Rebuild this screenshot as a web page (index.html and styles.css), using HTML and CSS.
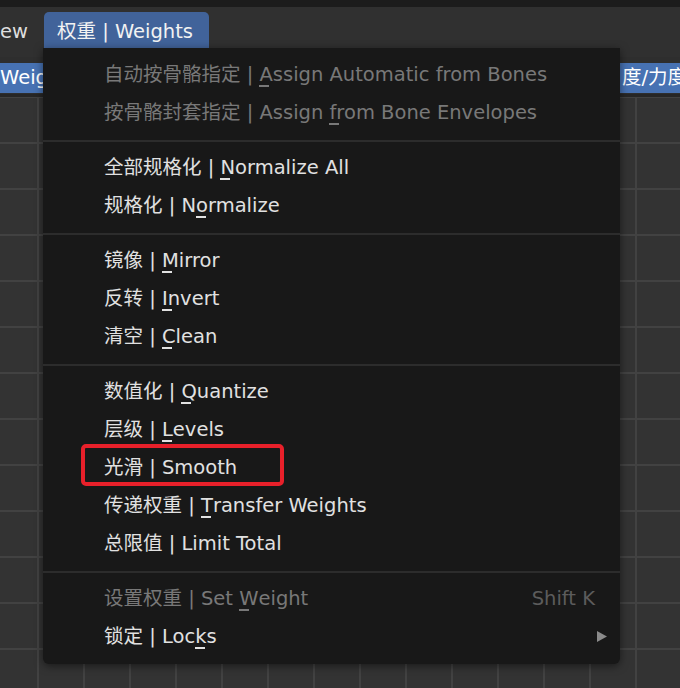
FILE: index.html
```html
<!DOCTYPE html>
<html lang="zh-CN">
<head>
    <meta charset="UTF-8">
    <meta name="viewport" content="width=device-width, initial-scale=1.0">
    <title>权重 | Weights</title>
    <link rel="stylesheet" href="styles.css">
</head>
<body>
    <div class="top-strip"></div>

    <!-- Header menus -->
    <div class="header">
        <span class="header-item">ew</span>
        <span class="header-tab">权重 | Weights</span>
    </div>

    <!-- Tool settings row -->
    <div class="toolbar">
        <span class="tool-pill pill-left">Weights</span>
        <span class="tool-pill pill-right">度/力度</span>
    </div>

    <div class="viewport"></div>

    <!-- Open dropdown -->
    <div class="menu">
        <div class="menu-item disabled"><span class="label">自动按骨骼指定 | <span class="key">A</span>ssign Automatic from Bones</span></div>
        <div class="menu-item disabled"><span class="label">按骨骼封套指定 | Assign <span class="key">f</span>rom Bone Envelopes</span></div>
        <div class="menu-sep"></div>
        <div class="menu-item"><span class="label">全部规格化 | <span class="key">N</span>ormalize All</span></div>
        <div class="menu-item"><span class="label">规格化 | N<span class="key">o</span>rmalize</span></div>
        <div class="menu-sep"></div>
        <div class="menu-item"><span class="label">镜像 | <span class="key">M</span>irror</span></div>
        <div class="menu-item"><span class="label">反转 | <span class="key">I</span>nvert</span></div>
        <div class="menu-item"><span class="label">清空 | <span class="key">C</span>lean</span></div>
        <div class="menu-sep"></div>
        <div class="menu-item"><span class="label">数值化 | <span class="key">Q</span>uantize</span></div>
        <div class="menu-item"><span class="label">层级 | <span class="key">L</span>evels</span></div>
        <div class="menu-item"><span class="label">光滑 | Smooth</span><span class="highlight"></span></div>
        <div class="menu-item"><span class="label">传递权重 | <span class="key">T</span>ransfer Weights</span></div>
        <div class="menu-item"><span class="label">总限值 | Limit Total</span></div>
        <div class="menu-sep"></div>
        <div class="menu-item disabled"><span class="label">设置权重 | Set <span class="key">W</span>eight</span><span class="shortcut">Shift K</span></div>
        <div class="menu-item"><span class="label">锁定 | Loc<span class="key">k</span>s</span><svg class="submenu-arrow" width="10" height="11" viewBox="0 0 10 11"><polygon points="0,0 10,5.5 0,11" fill="#8a8a8a"/></svg></div>
    </div>
</body>
</html>
```

FILE: styles.css
```css
* {
    box-sizing: border-box;
}
html,
body {
    margin: 0;
}
body {
    width: 680px;
    height: 688px;
    overflow: hidden;
    position: relative;
    display: flex;
    flex-direction: column;
    font-family: "DejaVu Sans", "Noto Sans CJK SC", sans-serif;
    font-size: 19.5px;
    color: #e1e1e1;
    background: #303030;
}
.top-strip {
    height: 7px;
    background: #1c1c1c;
}
.header {
    height: 50px;
    display: flex;
    align-items: flex-start;
    padding-top: 5px;
    background: #303030;
}
.header-item {
    height: 36px;
    line-height: 40px;
    padding-right: 16px;
    color: #dedede;
}
.header-tab {
    height: 36px;
    line-height: 40px;
    padding: 0 16px 0 13px;
    background: #41639a;
    border-radius: 5px 5px 0 0;
    color: #f2f2f2;
    white-space: nowrap;
}
.toolbar {
    height: 40px;
    display: flex;
    justify-content: space-between;
    padding-top: 6px;
    background: #2e2e2e;
    border-bottom: 3px solid #262626;
}
.tool-pill {
    height: 30px;
    line-height: 30px;
    background: #4772b3;
    color: #fff;
    overflow: hidden;
    white-space: nowrap;
}
.pill-left {
    width: 43px;
}
.pill-right {
    width: 60px;
    padding-left: 2px;
}
.viewport {
    flex: 1;
    background-color: #333333;
    background-image:
        linear-gradient(#424242 2px, transparent 2px),
        linear-gradient(90deg, #424242 2px, transparent 2px);
    background-size: 46px 46px;
    background-position: 37px 45px;
}

/* dropdown */
.menu {
    position: absolute;
    left: 43px;
    top: 48px;
    width: 577px;
    padding: 7px 0 9px;
    background: #181818;
    border-radius: 0 0 6px 6px;
    box-shadow: 0 2px 8px rgba(0, 0, 0, 0.5);
}
.menu-item {
    position: relative;
    display: flex;
    align-items: center;
    height: 38px;
    padding: 0 13px 4px 61px;
    white-space: nowrap;
    color: #e1e1e1;
}
.menu-item.disabled {
    color: #787878;
}
.menu-sep {
    height: 2px;
    margin: 9px 0 6px;
    background: #2c2c2c;
}
.key {
    position: relative;
}
.key::after {
    content: "";
    position: absolute;
    left: 0;
    bottom: -1px;
    width: 10px;
    height: 2px;
    background: currentColor;
}
.shortcut {
    margin-left: auto;
    padding: 4px 12px 0 0;
    color: #5c5c5c;
}
.submenu-arrow {
    margin: 4px 0 0 auto;
}
/* red annotation box */
.highlight {
    position: absolute;
    left: 38px;
    top: -4px;
    width: 203px;
    height: 42px;
    border: 4px solid #e8202a;
    border-radius: 5px;
}
```
